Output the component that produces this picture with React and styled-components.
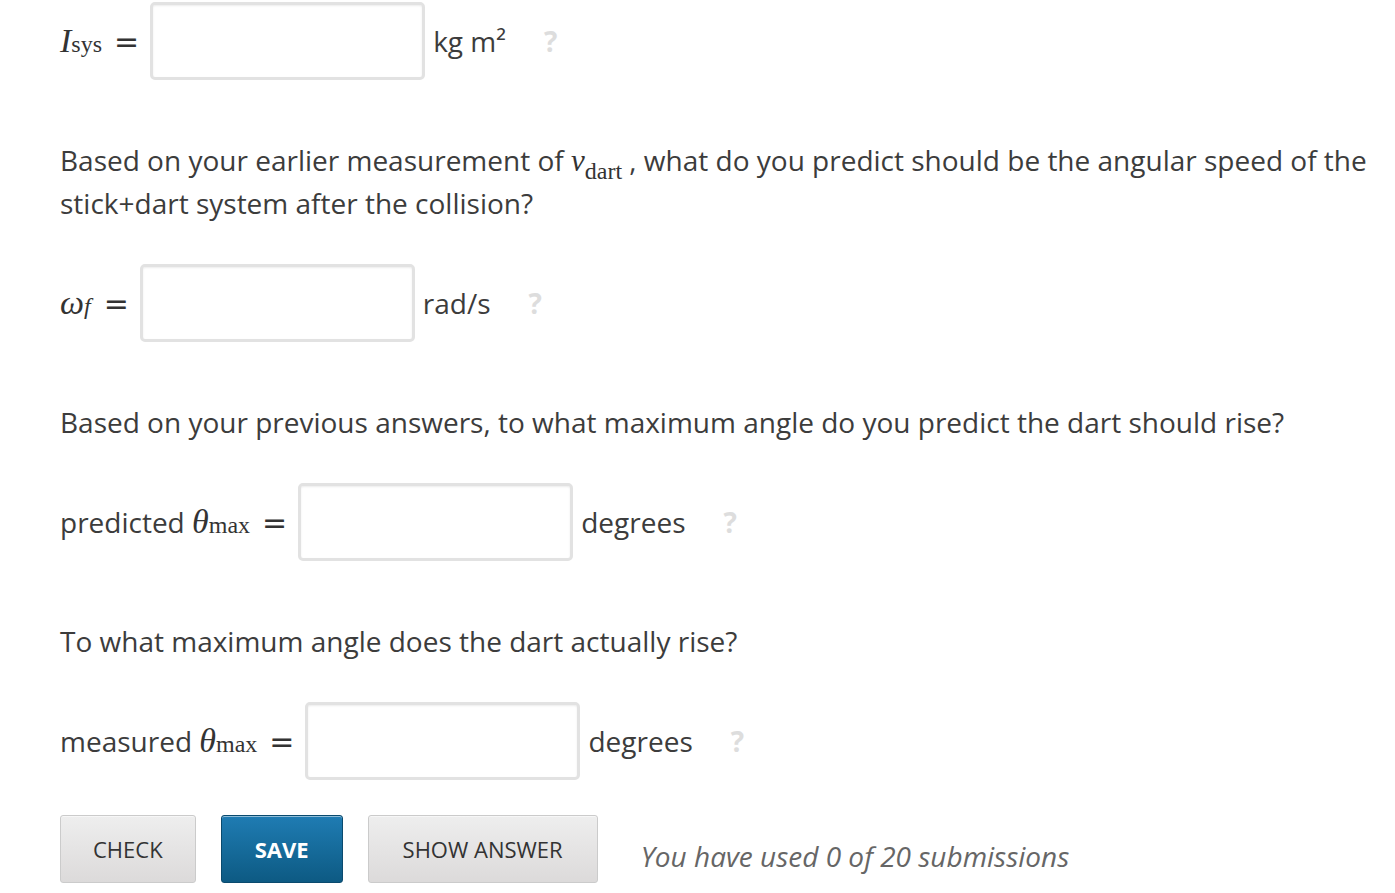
import React from 'react';
import styled, { createGlobalStyle } from 'styled-components';

const GlobalStyle = createGlobalStyle`
  html, body {
    margin: 0;
    padding: 0;
    background: #fff;
  }
  body {
    font-family: 'Open Sans', 'Liberation Sans', sans-serif;
    color: #3c3c3c;
  }
`;

const Problem = styled.div`
  padding: 2px 0 0 60px;
  display: flex;
  flex-direction: column;
`;

const Prompt = styled.p`
  margin: 0 0 40px;
  font-size: 28px;
  line-height: 42px;
  max-width: 1320px;
`;

const AnswerRow = styled.div`
  display: flex;
  align-items: center;
  margin-bottom: ${({ last }) => (last ? '35px' : '59px')};
`;

const Label = styled.span`
  display: inline-flex;
  align-items: baseline;
  font-size: 28px;
  white-space: nowrap;
`;

const MathVar = styled.span`
  font-family: 'Liberation Serif', 'DejaVu Serif', serif;
  font-style: italic;
  font-size: ${({ size }) => size || '34px'};
  color: #333;
`;

const MathSub = styled.sub`
  font-family: 'Liberation Serif', 'DejaVu Serif', serif;
  font-style: ${({ italic }) => (italic ? 'italic' : 'normal')};
  font-size: 24px;
  vertical-align: -8px;
  line-height: 0;
  color: #333;
`;

const Equals = styled.span`
  font-family: 'DejaVu Sans', sans-serif;
  font-size: 30px;
  color: #333;
  margin: 0 11px 0 ${({ gap }) => gap || '12px'};
`;

const Field = styled.input`
  box-sizing: border-box;
  width: 275px;
  height: 78px;
  border: 3px solid #e2e2e2;
  border-radius: 5px;
  box-shadow: inset 0 1px 2px rgba(0, 0, 0, 0.08);
  background: #fff;
  font-size: 24px;
  padding: 0 12px;
  outline: none;
`;

const Unit = styled.span`
  font-size: 28px;
  margin-left: 8px;
  color: #3c3c3c;
`;

const Help = styled.span`
  font-size: 28px;
  font-weight: 700;
  color: #dddddd;
  margin-left: 38px;
`;

const ActionBar = styled.div`
  display: flex;
  align-items: center;
  gap: 25px;
`;

const Button = styled.button`
  height: 68px;
  padding: 0 ${({ pad }) => pad || '32px'};
  border-radius: 3px;
  font-family: 'Open Sans', 'Liberation Sans', sans-serif;
  font-size: 22px;
  text-transform: uppercase;
  cursor: pointer;
  border: 1px solid ${({ primary }) => (primary ? '#0a4a6e' : '#cbcbcb')};
  color: ${({ primary }) => (primary ? '#fff' : '#333')};
  font-weight: ${({ primary }) => (primary ? 700 : 400)};
  background: ${({ primary }) =>
    primary
      ? 'linear-gradient(#1f7cb3, #0d5a83)'
      : 'linear-gradient(#eeeeee, #dcdada)'};
  box-shadow: inset 0 1px 0 rgba(255, 255, 255, 0.5);
`;

const Submissions = styled.span`
  margin-left: 18px;
  margin-top: 14px;
  font-size: 28px;
  font-style: italic;
  color: #666;
`;

const Row = ({ label, unit, gap, last }) => (
  <AnswerRow last={last}>
    <Label>{label}</Label>
    <Equals gap={gap}>=</Equals>
    <Field type="text" />
    <Unit>{unit}</Unit>
    <Help>?</Help>
  </AnswerRow>
);

const App = () => (
  <>
    <GlobalStyle />
    <Problem>
      <Row
        label={
          <>
            <MathVar>I</MathVar>
            <MathSub>sys</MathSub>
          </>
        }
        unit="kg m²"
      />

      <Prompt>
        Based on your earlier measurement of{' '}
        <MathVar size="31px">v</MathVar>
        <MathSub>dart</MathSub> , what do you predict should be the angular speed of the
        stick+dart system after the collision?
      </Prompt>

      <Row
        label={
          <>
            <MathVar>ω</MathVar>
            <MathSub italic>f</MathSub>
          </>
        }
        gap="13px"
        unit="rad/s"
      />

      <Prompt>
        Based on your previous answers, to what maximum angle do you predict the dart should rise?
      </Prompt>

      <Row
        label={
          <>
            predicted&nbsp;<MathVar>θ</MathVar>
            <MathSub>max</MathSub>
          </>
        }
        unit="degrees"
      />

      <Prompt>To what maximum angle does the dart actually rise?</Prompt>

      <Row
        last
        label={
          <>
            measured&nbsp;<MathVar>θ</MathVar>
            <MathSub>max</MathSub>
          </>
        }
        unit="degrees"
      />

      <ActionBar>
        <Button>Check</Button>
        <Button primary pad="33px">Save</Button>
        <Button pad="34px">Show Answer</Button>
        <Submissions>You have used 0 of 20 submissions</Submissions>
      </ActionBar>
    </Problem>
  </>
);

export default App;
